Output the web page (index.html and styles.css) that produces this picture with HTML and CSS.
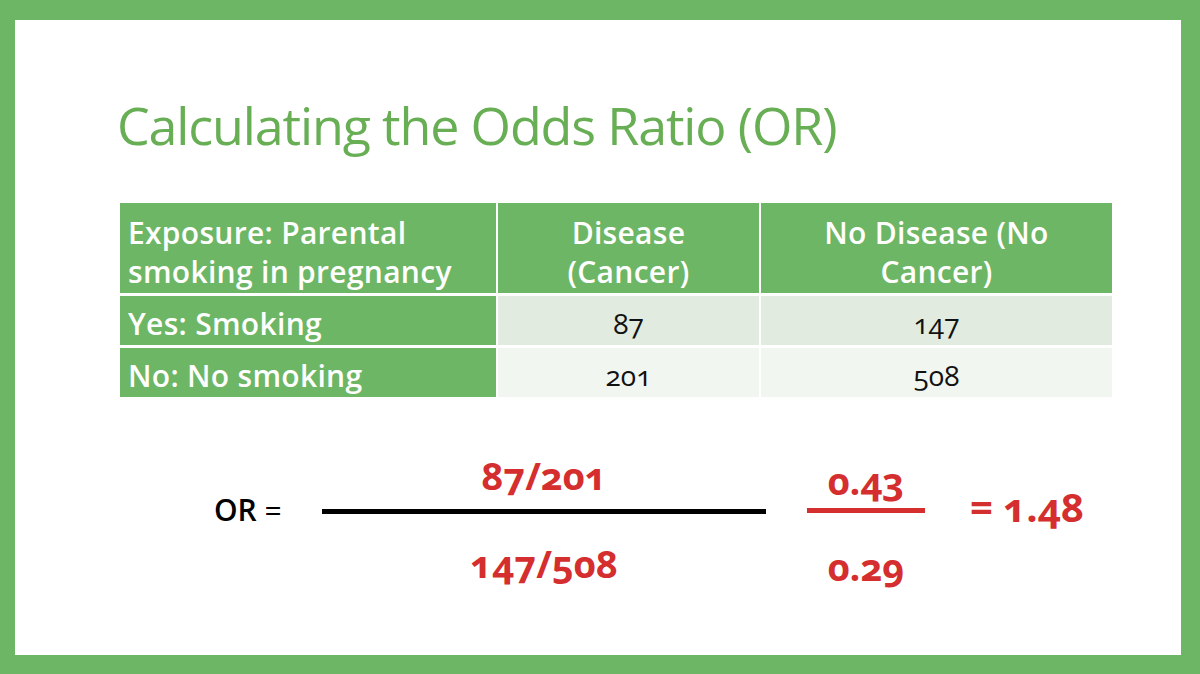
FILE: index.html
```html
<!DOCTYPE html>
<html>
<head>
<meta charset="utf-8">
<link rel="stylesheet" href="styles.css">
</head>
<body>
<div class="frame">
  <div class="slide">
    <h1 class="title">Calculating the Odds Ratio (OR)</h1>
    <div class="table">
      <div class="cell head first">Exposure: Parental smoking in pregnancy</div>
      <div class="cell head center">Disease<br>(Cancer)</div>
      <div class="cell head center">No Disease (No<br>Cancer)</div>
      <div class="cell rowhead">Yes: Smoking</div>
      <div class="cell num odd">87</div>
      <div class="cell num odd">147</div>
      <div class="cell rowhead">No: No smoking</div>
      <div class="cell num even">201</div>
      <div class="cell num even">508</div>
    </div>
    <div class="formula">
      <div class="or-label">OR <span class="eq">=</span></div>
      <div class="frac big">
        <div class="numer">87/201</div>
        <div class="bar black"></div>
        <div class="denom">147/508</div>
      </div>
      <div class="frac small">
        <div class="numer">0.43</div>
        <div class="bar red"></div>
        <div class="denom">0.29</div>
      </div>
      <div class="result">= 1.48</div>
    </div>
  </div>
</div>
</body>
</html>
```

FILE: styles.css
```css
html, body {
  margin: 0;
  padding: 0;
  width: 1200px;
  height: 674px;
  overflow: hidden;
}
.frame {
  width: 1200px;
  height: 674px;
  box-sizing: border-box;
  background: #6db665;
  padding: 20px 19px 19px 15px;
}
.slide {
  background: #ffffff;
  height: 100%;
  box-sizing: border-box;
  padding: 0 0 0 105px;
  display: flex;
  flex-direction: column;
  font-family: "Open Sans", sans-serif;
  font-variant-numeric: oldstyle-nums;
}
.title {
  margin: 75px 0 0 -3px;
  font-family: "Open Sans", sans-serif;
  font-weight: 400;
  font-size: 52px;
  line-height: 60px;
  letter-spacing: -1.15px;
  color: #68ae55;
  height: 60px;
}
.table {
  margin-top: 48px;
  display: grid;
  grid-template-columns: 376px 261px 351px;
  grid-template-rows: 90px 49px 49px;
  column-gap: 2px;
  row-gap: 3px;
  width: 992px;
}
.cell {
  box-sizing: border-box;
  font-size: 30px;
  line-height: 39px;
  display: flex;
  align-items: center;
  padding-top: 6px;
}
.head {
  background: #6db665;
  color: #fff;
  font-weight: 600;
  letter-spacing: 0.3px;
  padding-top: 8px;
}
.head.first { padding-left: 8px; padding-right: 8px; }
.head.center { justify-content: center; text-align: center; }
.rowhead {
  background: #6db665;
  color: #fff;
  font-weight: 600;
  letter-spacing: 0.3px;
  padding-left: 8px;
  padding-right: 8px;
}
.num {
  justify-content: center;
  color: #111;
  font-size: 28px;
}
.num.odd { background: #e1ebdf; }
.num.even { background: #f1f6f0; }
.formula {
  margin-top: 55px;
  display: flex;
  align-items: flex-start;
}
.or-label {
  margin-left: 94px;
  margin-top: 40px;
  width: 108px;
  font-size: 30px;
  line-height: 36px;
  font-weight: 600;
  color: #000;
}
.or-label .eq { font-weight: 400; }
.frac {
  display: flex;
  flex-direction: column;
  align-items: center;
  color: #d42e2e;
  font-weight: 700;
}
.frac.big { width: 444px; font-size: 38px; }
.frac.big .numer { line-height: 46px; height: 46px; }
.frac.big .bar { margin-top: 11px; height: 5px; background: #000; }
.frac.big .denom { line-height: 46px; height: 46px; margin-top: 26px; }
.frac.small { width: 118px; margin-left: 41px; font-size: 38px; }
.frac.small .numer { line-height: 40px; height: 40px; margin-top: 8px; }
.frac.small .bar { margin-top: 8px; height: 5px; background: #d42e2e; }
.frac.small .denom { line-height: 40px; height: 40px; margin-top: 33px; }
.bar { width: 100%; }
.result {
  margin-left: 45px;
  margin-top: 33px;
  font-size: 40px;
  line-height: 44px;
  font-weight: 700;
  color: #d42e2e;
}
```
